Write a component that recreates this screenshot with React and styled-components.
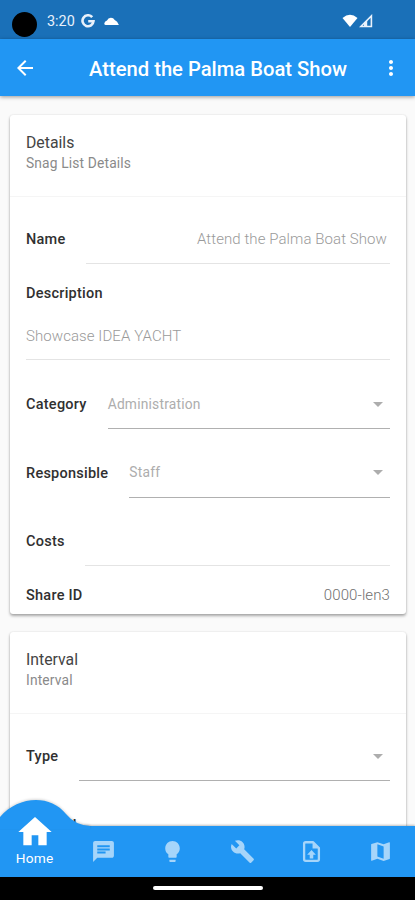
import styled, { createGlobalStyle } from "styled-components";
import {
  MdArrowBack,
  MdArrowDropDown,
  MdBuild,
  MdChat,
  MdHome,
  MdLightbulb,
  MdMap,
  MdMoreVert,
} from "react-icons/md";

const GlobalStyle = createGlobalStyle`
  * {
    box-sizing: border-box;
  }

  body {
    margin: 0;
    font-family: "Roboto", "Liberation Sans", sans-serif;
    background: #fafafa;
  }
`;

const Screen = styled.div`
  display: flex;
  flex-direction: column;
  width: 415px;
  height: 900px;
  overflow: hidden;
  background: #fafafa;
`;

const StatusBar = styled.div`
  display: flex;
  align-items: center;
  flex-shrink: 0;
  height: 39px;
  padding: 3px 42px 0 12px;
  background: #1a70b8;
  color: #e8f1fb;

  svg {
    display: block;
  }
`;
const Camera = styled.div`
  width: 25px;
  height: 25px;
  margin-top: 7px;
  border-radius: 50%;
  background: #000000;
`;
const Clock = styled.span`
  width: 34px;
  margin-top: 1px;
  margin-left: 10px;
  font-size: 14.4px;
  font-weight: 400;
  line-height: 20px;
`;
const StatusIcons = styled.div`
  display: flex;
  align-items: center;
  gap: ${(props) => props.$gap}px;
  margin-top: -1px;
  margin-left: ${(props) => (props.$end ? "auto" : "0")};
`;

const AppBar = styled.header`
  position: relative;
  z-index: 1;
  display: flex;
  align-items: center;
  flex-shrink: 0;
  height: 57px;
  padding: 0 12px 0 13px;
  background: #2196f3;
  color: #ffffff;
  box-shadow: 0 1px 4px rgba(0, 0, 0, 0.4);
`;
const Title = styled.h1`
  flex: 1;
  margin: 2px 0 0;
  padding-left: 20px;
  text-align: center;
  font-size: 20.2px;
  font-weight: 500;
  line-height: 24px;
  white-space: nowrap;
`;

const Content = styled.main`
  display: flex;
  flex-direction: column;
  flex: 1;
  gap: 18px;
  min-height: 0;
  padding: 19px 9px 0 10px;
  overflow: hidden;
`;
const Card = styled.section`
  flex-shrink: 0;
  height: ${(props) => props.$height}px;
  border-radius: 3px;
  background: #ffffff;
  box-shadow: 0 2px 3px rgba(0, 0, 0, 0.32), 0 0 2px rgba(0, 0, 0, 0.12);
`;
const CardHeader = styled.div`
  height: 82px;
  padding: 17px 16px 0;
  border-bottom: 1px solid #f5f5f5;
`;
const CardTitle = styled.h2`
  margin: 0;
  font-size: 15.8px;
  font-weight: 400;
  line-height: 21px;
  color: #444444;
`;
const CardSubtitle = styled.p`
  margin: 0;
  font-size: 13.8px;
  font-weight: 400;
  line-height: 20px;
  letter-spacing: 0.15px;
  color: #8a8a8a;
`;

const Fields = styled.div`
  padding: 17px 16px 0;
`;
const Row = styled.div`
  display: flex;
  align-items: flex-start;
  gap: ${(props) => props.$gap || 20}px;
  height: ${(props) => props.$height || 50}px;
  margin-bottom: ${(props) => props.$space || 0}px;
`;
const Label = styled.label`
  flex-shrink: 0;
  font-size: 14.5px;
  font-weight: 500;
  line-height: ${(props) => props.$line || 52}px;
  letter-spacing: 0.25px;
  color: #303030;
`;
const Value = styled.div`
  display: flex;
  flex: 1;
  align-items: center;
  justify-content: ${(props) => (props.$right ? "flex-end" : "space-between")};
  height: 100%;
  padding-top: ${(props) => props.$top || 0}px;
  padding-right: ${(props) => (props.$right ? 3 : 0)}px;
  border-bottom: 1px solid #e4e4e4;
  font-size: 15px;
  font-weight: 300;
  letter-spacing: 0.08px;
  color: #9a9a9a;
`;
const Select = styled(Value)`
  border-bottom-color: #b0b0b0;
  font-size: 13.8px;
  font-weight: 400;
  letter-spacing: 0.2px;
  color: #adadad;
`;
const ShareId = styled.span`
  margin-left: auto;
  font-size: 15px;
  font-weight: 300;
  line-height: 21px;
  letter-spacing: 0.1px;
  color: #707070;
`;

const TabBar = styled.nav`
  position: relative;
  z-index: 1;
  display: flex;
  flex-shrink: 0;
  height: 51px;
  background: #2196f3;
  box-shadow: 0 -1px 2px rgba(0, 0, 0, 0.25);
`;
const Hump = styled.svg`
  position: absolute;
  left: 0;
  top: -27px;
  filter: drop-shadow(0 -1px 1px rgba(0, 0, 0, 0.15));
`;
const Tab = styled.button`
  display: flex;
  align-items: center;
  justify-content: center;
  flex: 1;
  padding: 0;
  border: 0;
  background: none;
  color: #a6d5fa;
`;
const HomeTab = styled(Tab)`
  position: relative;
  flex-direction: column;
  justify-content: flex-end;
  padding-bottom: 11px;
  color: #ffffff;
  font-family: inherit;
  font-size: 13.7px;
  line-height: 16px;
  letter-spacing: 0.2px;

  svg {
    flex-shrink: 0;
    margin-bottom: -2px;
  }
`;
const SystemBar = styled.div`
  display: flex;
  justify-content: center;
  flex-shrink: 0;
  height: 23px;
  padding-top: 9px;
  background: #000000;
`;
const Pill = styled.div`
  width: 110px;
  height: 4px;
  border-radius: 2px;
  background: #ffffff;
`;

function SelectField({ label, value }) {
  return (
    <Row $gap={21} $space={18.5}>
      <Label>{label}</Label>
      <Select>
        {value || <span />}
        <MdArrowDropDown size={24} />
      </Select>
    </Row>
  );
}

function UploadFileIcon({ size }) {
  return (
    <svg width={size} height={size} viewBox="0 0 24 24">
      <path
        d="M13.6 3.1H6.4Q4.9 3.1 4.9 4.6V19.4Q4.9 20.9 6.4 20.9H17.6Q19.1 20.9 19.1 19.4V8.6Z"
        fill="none"
        stroke="currentColor"
        strokeWidth="2.2"
        strokeLinejoin="round"
      />
      <path d="M13 3V9H19Z" fill="currentColor" />
      <path d="M12 10.6L16.2 15H13.7V18.6H10.3V15H7.8Z" fill="currentColor" />
    </svg>
  );
}

const tabs = [MdChat, MdLightbulb, MdBuild, UploadFileIcon, MdMap];

function App() {
  return (
    <>
      <GlobalStyle />
      <Screen>
        <StatusBar>
          <Camera />
          <Clock>3:20</Clock>
          <StatusIcons $gap={9}>
            <svg width="14" height="14" viewBox="0 0 14 14">
              <path
                d="M11.2 3.2A5.5 5.5 0 1 0 12.5 7.2H7.2"
                fill="none"
                stroke="currentColor"
                strokeWidth="2.6"
              />
            </svg>
            <svg width="15" height="10" viewBox="0 0 15 10">
              <path
                d="M1.6 9Q0 9 0.3 7.2Q0.9 4.9 3 4.4A4.3 4.3 0 0 1 10.7 4.1Q13.4 5.2 14.9 9Z"
                fill="#ffffff"
              />
            </svg>
          </StatusIcons>
          <StatusIcons $gap={1} $end>
            <svg width="16" height="14" viewBox="0 0 16 14">
              <path d="M0.5 4Q8-2.4 15.5 4L8 13Z" fill="#ffffff" />
            </svg>
            <svg width="14" height="14" viewBox="0 0 14 14">
              <path
                d="M1.8 12.5H12.4V1.9Z"
                fill="none"
                stroke="currentColor"
                strokeWidth="1.6"
              />
              <path d="M8.2 6V12.5H5V9Z" fill="currentColor" />
            </svg>
          </StatusIcons>
        </StatusBar>
        <AppBar>
          <MdArrowBack size={24} />
          <Title>Attend the Palma Boat Show</Title>
          <MdMoreVert size={24} />
        </AppBar>

        <Content>
          <Card $height={499}>
            <CardHeader>
              <CardTitle>Details</CardTitle>
              <CardSubtitle>Snag List Details</CardSubtitle>
            </CardHeader>
            <Fields>
              <Row $space={19}>
                <Label>Name</Label>
                <Value $right>Attend the Palma Boat Show</Value>
              </Row>
              <Row $height={20}>
                <Label $line={21}>Description</Label>
              </Row>
              <Row $height={57} $space={19}>
                <Value $top={9}>Showcase IDEA YACHT</Value>
              </Row>
              <SelectField label="Category" value="Administration" />
              <SelectField label="Responsible" value="Staff" />
              <Row $space={19}>
                <Label>Costs</Label>
                <Value />
              </Row>
              <Row $height={20}>
                <Label $line={22}>Share ID</Label>
                <ShareId>0000-len3</ShareId>
              </Row>
            </Fields>
          </Card>
          <Card $height={300}>
            <CardHeader>
              <CardTitle>Interval</CardTitle>
              <CardSubtitle>Interval</CardSubtitle>
            </CardHeader>
            <Fields>
              <SelectField label="Type" />
              <Row>
                <Label>Interval</Label>
                <Value />
              </Row>
            </Fields>
          </Card>
        </Content>

        <TabBar>
          <Hump width="90" height="30" viewBox="0 0 90 30">
            <path
              d="M0 18C18-3 50-5 66 15Q75 26 90 27V30H0Z"
              fill="#2196f3"
            />
          </Hump>
          <HomeTab>
            <MdHome size={40} />
            Home
          </HomeTab>
          {tabs.map((Icon, i) => (
            <Tab key={i}>
              <Icon size={25} />
            </Tab>
          ))}
        </TabBar>
        <SystemBar>
          <Pill />
        </SystemBar>
      </Screen>
    </>
  );
}

export default App;
